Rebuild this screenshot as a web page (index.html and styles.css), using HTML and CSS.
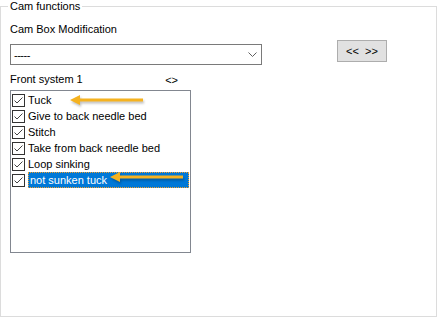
FILE: index.html
```html
<!DOCTYPE html>
<html lang="en">
<head>
  <meta charset="UTF-8">
  <title>Cam functions</title>
  <link rel="stylesheet" href="styles.css">
</head>
<body>
  <fieldset class="group">
    <legend>Cam functions</legend>

    <div class="label first">Cam Box Modification</div>

    <div class="combo-row">
      <div class="combo">
        <span class="combo-text">-----</span>
        <svg class="chevron" width="9" height="5" viewBox="0 0 9 5">
          <path d="M0.5 0.5 L4.5 4.5 L8.5 0.5" fill="none" stroke="#606060" stroke-width="1"/>
        </svg>
      </div>
      <button class="nav">&lt;&lt;&nbsp;&nbsp;&gt;&gt;</button>
    </div>

    <div class="list-head">
      <span class="label">Front system 1</span>
      <span class="swap">&lt;&gt;</span>
    </div>

    <div class="listbox">
      <div class="item"><span class="check"></span><span class="text">Tuck</span></div>
      <div class="item"><span class="check"></span><span class="text">Give to back needle bed</span></div>
      <div class="item"><span class="check"></span><span class="text">Stitch</span></div>
      <div class="item"><span class="check"></span><span class="text">Take from back needle bed</span></div>
      <div class="item"><span class="check"></span><span class="text">Loop sinking</span></div>
      <div class="item selected"><span class="check"></span><span class="text">not sunken tuck</span></div>

      <!-- annotation arrows drawn over the list -->
      <svg class="arrow arrow-1" width="80" height="14" viewBox="0 0 80 14">
        <path d="M1 7 L11 2 L11 5.5 L74 5.5 L74 8.5 L11 8.5 L11 12 Z" fill="#f5b21f"/>
      </svg>
      <svg class="arrow arrow-2" width="80" height="14" viewBox="0 0 80 14">
        <path d="M1 7 L11 2 L11 5.5 L74 5.5 L74 8.5 L11 8.5 L11 12 Z" fill="#f5b21f"/>
      </svg>
    </div>
  </fieldset>
</body>
</html>
```

FILE: styles.css
```css
body {
  margin: 0;
  background: #fff;
  font-family: "Liberation Sans", Arial, sans-serif;
  font-size: 11px;
  color: #000;
}
.group {
  box-sizing: border-box;
  width: 437px;
  height: 317px;
  margin: 0;
  padding: 0 9px;
  border: 1px solid #dcdcdc;
}
.group legend {
  margin-left: -2px;
  padding: 0 2px;
  line-height: 13px;
}
.label {
  line-height: 16px;
}
.label.first {
  margin-top: 8px;
}
.combo-row {
  display: flex;
  align-items: flex-start;
  margin-top: 3px;
}
.combo {
  box-sizing: border-box;
  width: 252px;
  height: 21px;
  margin-top: 4px;
  border: 1px solid #7a7a7a;
  display: flex;
  align-items: center;
  padding: 0 0 0 3px;
}
.combo-text {
  flex: 1;
  letter-spacing: -0.5px;
}
.chevron {
  margin-right: 4px;
}
.nav {
  box-sizing: border-box;
  width: 50px;
  height: 22px;
  margin-left: 75px;
  padding: 0;
  background: #e1e1e1;
  border: 1px solid #adadad;
  font-family: "Liberation Sans", Arial, sans-serif;
  font-size: 11px;
  color: #000;
}
.list-head {
  box-sizing: border-box;
  width: 181px;
  display: flex;
  justify-content: space-between;
  padding-right: 13px;
  margin-top: 6px;
  height: 19px;
}
.swap {
  margin-top: 1px;
  line-height: 16px;
}
.listbox {
  position: relative;
  box-sizing: border-box;
  width: 181px;
  height: 163px;
  border: 1px solid #828790;
  padding-top: 1px;
}
.item {
  display: flex;
  align-items: center;
  height: 16px;
  padding-left: 1px;
}
.check {
  box-sizing: border-box;
  width: 13px;
  height: 13px;
  margin-right: 3px;
  border: 1px solid #333;
  background: #fff url("data:image/svg+xml;utf8,<svg xmlns='http://www.w3.org/2000/svg' width='11' height='11'><path d='M1.5 5.5 L4 8 L9.5 2.5' fill='none' stroke='%23444' stroke-width='1'/></svg>") no-repeat center;
}
.text {
  line-height: 16px;
  white-space: nowrap;
}
.selected .text {
  box-sizing: border-box;
  flex: 1;
  margin-right: 1px;
  padding-left: 1px;
  background: #0078d7;
  color: #fff;
  border: 1px dotted #f0a030;
  line-height: 14px;
  height: 16px;
}
.arrow {
  position: absolute;
  filter: drop-shadow(1px 2px 1px rgba(0, 0, 0, 0.25));
}
.arrow-1 {
  left: 58px;
  top: 2px;
}
.arrow-2 {
  left: 98px;
  top: 79px;
}
```
